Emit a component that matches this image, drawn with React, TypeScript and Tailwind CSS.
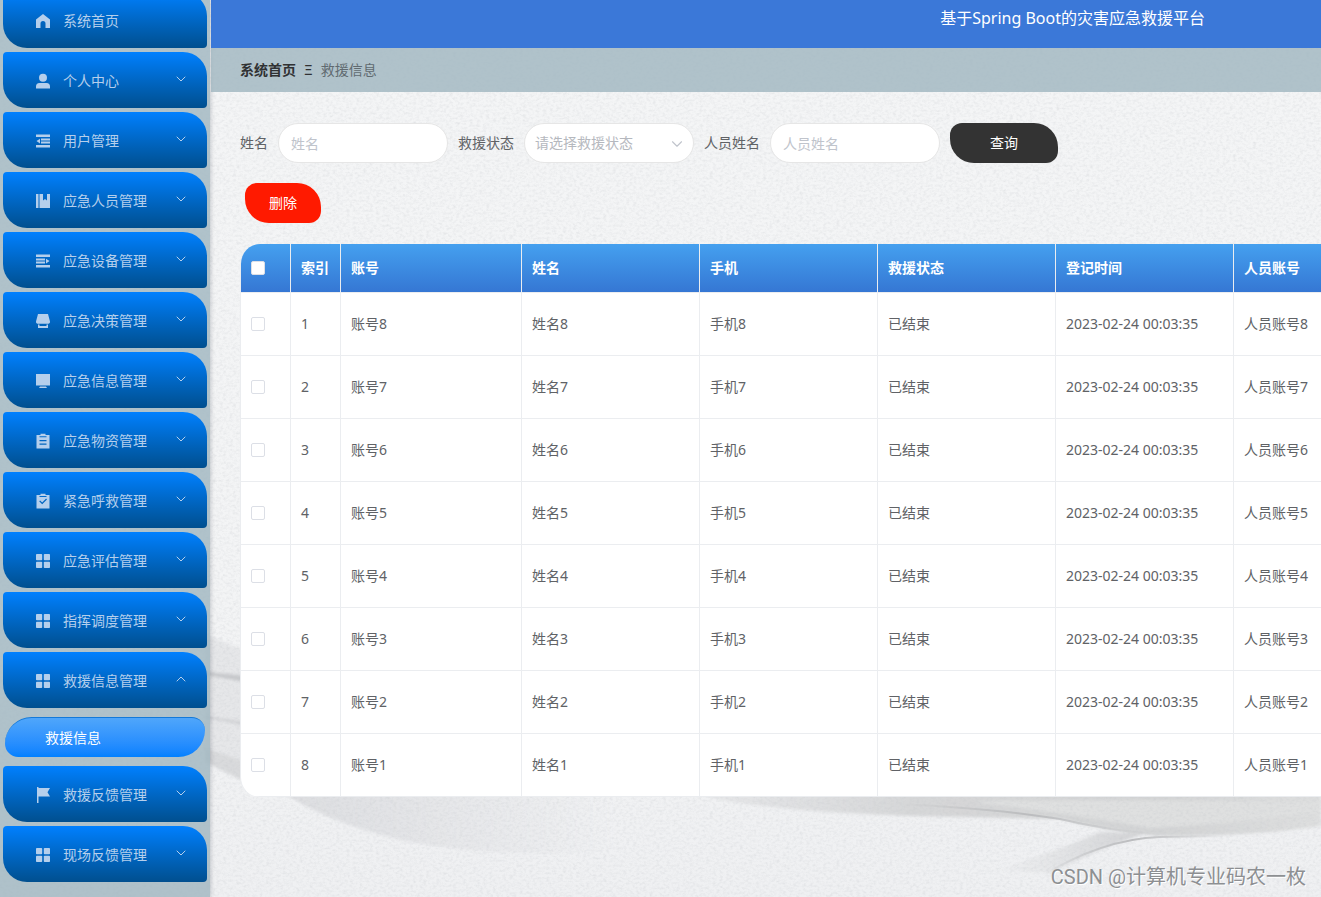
import { useState } from 'react'
import type { ReactNode } from 'react'
import { ChevronDown, ChevronUp } from 'lucide-react'

type IconName =
  | 'home'
  | 'user'
  | 'fold'
  | 'management'
  | 'unfold'
  | 'shop'
  | 'platform'
  | 'order'
  | 'claim'
  | 'menu'
  | 'flag'

interface MenuItem {
  label: string
  icon: IconName
  children?: string[]
}

const MENU: MenuItem[] = [
  { label: '系统首页', icon: 'home' },
  { label: '个人中心', icon: 'user', children: ['修改密码', '个人信息'] },
  { label: '用户管理', icon: 'fold', children: ['用户'] },
  { label: '应急人员管理', icon: 'management', children: ['应急人员'] },
  { label: '应急设备管理', icon: 'unfold', children: ['应急设备'] },
  { label: '应急决策管理', icon: 'shop', children: ['应急决策'] },
  { label: '应急信息管理', icon: 'platform', children: ['应急信息'] },
  { label: '应急物资管理', icon: 'order', children: ['应急物资'] },
  { label: '紧急呼救管理', icon: 'claim', children: ['紧急呼救'] },
  { label: '应急评估管理', icon: 'menu', children: ['应急评估'] },
  { label: '指挥调度管理', icon: 'menu', children: ['指挥调度'] },
  { label: '救援信息管理', icon: 'menu', children: ['救援信息'] },
  { label: '救援反馈管理', icon: 'flag', children: ['救援反馈'] },
  { label: '现场反馈管理', icon: 'menu', children: ['现场反馈'] },
]

const HEADERS = ['索引', '账号', '姓名', '手机', '救援状态', '登记时间', '人员账号']

const ROWS = [8, 7, 6, 5, 4, 3, 2, 1].map((n) => ({
  id: n,
  account: `账号${n}`,
  name: `姓名${n}`,
  phone: `手机${n}`,
  status: '已结束',
  time: '2023-02-24 00:03:35',
  staff: `人员账号${n}`,
}))

const ICONS: Record<IconName, ReactNode> = {
  home: <path d="M8 1 1 6.6V15h4.500v-4.500a2.500 2.500 0 0 1 5 0V15H15V6.600z" />,
  user: (
    <>
      <circle cx="8" cy="4.800" r="4" />
      <path d="M1 15.500v-2a3.500 3.500 0 0 1 3.500-3.500h7a3.500 3.500 0 0 1 3.500 3.500v2z" />
    </>
  ),
  fold: (
    <>
      <path d="M1 1.500h14v2.600H1zM6 5.600h9v2H6zM6 8.600h9v2H6zM1 12h14v2.600H1z" />
      <path d="M1.500 8.100 5 5.800v4.600z" />
    </>
  ),
  management: <path d="M1 1h2.500v14H1zM4.500 1H8v6.500l2-1.600 2 1.600V1h3v14H4.500z" />,
  unfold: (
    <>
      <path d="M1 1.500h14v2.600H1zM1 5.600h9v2H1zM1 8.600h9v2H1zM1 12h14v2.600H1z" />
      <path d="M14.500 8.100 11 5.800v4.600z" />
    </>
  ),
  shop: (
    <path d="M3 1h10l2 7.500a2 2 0 0 1-1.500 2.300H2.500A2 2 0 0 1 1 8.500zM3 11.500h1.500v1.500h7v-1.500H13v3.500H3z" />
  ),
  platform: <path d="M1 1h14v11.500H1zM5 13.500h6l1 1.500H4z" />,
  order: (
    <path
      fillRule="evenodd"
      d="M5.500.800h5V2H14.500v13.500h-13V2h4zM4.500 3.200h7V4.200h-7zM4.500 7v1.200h7V7zM4.500 10.500v1.200h7v-1.200z"
    />
  ),
  claim: (
    <path
      fillRule="evenodd"
      d="M5.500.800h5V2H14.500v13.500h-13V2h4zM4.500 3h7v1h-7zM4.200 8.300l3 3L12 6.500l-.9-.9-3.900 3.900L5.100 7.400z"
    />
  ),
  menu: (
    <>
      <rect x="1" y="1" width="6.200" height="6.200" rx=".8" />
      <rect x="8.800" y="1" width="6.200" height="6.200" rx=".8" />
      <rect x="1" y="8.800" width="6.200" height="6.200" rx=".8" />
      <rect x="8.800" y="8.800" width="6.200" height="6.200" rx=".8" />
    </>
  ),
  flag: <path d="M2 0h1.500v1H15l-2.500 4.200L15 9.500H3.500V16H2z" />,
}

function MenuIcon({ name }: { name: IconName }) {
  return (
    <svg viewBox="0 0 16 16" className="size-4 shrink-0 fill-current" aria-hidden="true">
      {ICONS[name]}
    </svg>
  )
}

/** Linen texture with the grey ribbons that run along the bottom of the page. */
function Backdrop() {
  return (
    <svg
      viewBox="0 0 1321 897"
      preserveAspectRatio="none"
      className="absolute inset-0 h-full w-full"
      aria-hidden="true"
    >
      <defs>
        <filter id="linen" x="0" y="0" width="100%" height="100%">
          <feTurbulence type="fractalNoise" baseFrequency="0.3 0.4" numOctaves="3" seed="4" />
          <feColorMatrix values="0 0 0 0 0.5  0 0 0 0 0.52  0 0 0 0 0.55  0.35 0.35 0 0 -0.3" />
        </filter>
        <filter id="soft">
          <feGaussianBlur stdDeviation="1.500" />
        </filter>
        <linearGradient id="ribbon" x1="0" x2="1">
          <stop offset="0" stopColor="#dcdddf" stopOpacity="0.5" />
          <stop offset="0.35" stopColor="#d6d7d8" />
          <stop offset="0.75" stopColor="#d3d4d5" />
          <stop offset="1" stopColor="#dedfdf" />
        </linearGradient>
        <linearGradient id="fold-left" x1="0" x2="1">
          <stop offset="0" stopColor="#dcdde0" />
          <stop offset="1" stopColor="#dcdde0" stopOpacity="0" />
        </linearGradient>
        <linearGradient id="fold-right" x1="0" x2="1">
          <stop offset="0" stopColor="#d8d9db" stopOpacity="0" />
          <stop offset="1" stopColor="#d0d1d3" />
        </linearGradient>
        <linearGradient id="crease" x1="0" x2="1">
          <stop offset="0" stopColor="#bbbcbe" stopOpacity="0" />
          <stop offset="0.5" stopColor="#bbbcbe" />
          <stop offset="1" stopColor="#bbbcbe" stopOpacity="0" />
        </linearGradient>
        <linearGradient id="paper" x1="0" y1="0" x2="0" y2="1">
          <stop offset="0" stopColor="#f4f5f6" />
          <stop offset="0.7" stopColor="#f3f4f5" />
          <stop offset="1" stopColor="#eff0f2" />
        </linearGradient>
      </defs>
      <rect width="1321" height="897" fill="url(#paper)" />
      <g filter="url(#soft)">
        <path d="M205 634 Q225 642 245 651 V780 Q225 772 205 762z" fill="#e6e7e9" />
        <path d="M205 672 Q230 674 245 676 V682 Q225 678 205 675z" fill="#c6c7ca" />
        <path d="M205 716 Q230 719 245 722 V726 Q225 721 205 718z" fill="#d2d3d6" />
        <path d="M205 748 Q230 756 245 762 V782 Q225 772 205 762z" fill="#d9dadc" />
        <path d="M280 790 Q320 820 400 840 Q500 860 620 850 V790z" fill="url(#fold-left)" />
        <path
          d="M690 792 Q760 814 960 817 L1060 819 Q1110 832 1157 836 Q1260 836 1321 826 V790z"
          fill="url(#ribbon)"
        />
        <path d="M980 801 Q1120 799 1321 802 V812 Q1230 824 1150 828 Q1060 812 980 803z" fill="#dfe0e0" />
        <path d="M990 872 Q1060 850 1100 832 L1143 834 Q1100 848 1054 872z" fill="url(#fold-right)" />
      </g>
      <path d="M900 804 Q1000 809 1060 819 Q1110 831 1157 834" fill="none" stroke="url(#crease)" strokeWidth="2" />
      <path d="M1040 877 Q1102 839 1160 837 L1225 836" fill="none" stroke="url(#crease)" strokeWidth="2" />
      <rect width="1321" height="897" filter="url(#linen)" />
    </svg>
  )
}

function Sidebar() {
  const [open, setOpen] = useState('救援信息管理')

  return (
    <aside className="relative w-[210px] shrink-0 overflow-hidden bg-[#9fb5bf]/80 shadow-[1px_0_4px_rgba(0,21,41,0.2)]">
      <nav className="-mt-2 space-y-1 px-[3px] text-sm">
        {MENU.map((item) => {
          const expanded = open === item.label
          const Chevron = expanded ? ChevronUp : ChevronDown
          return (
            <div key={item.label}>
              <button
                type="button"
                aria-expanded={item.children ? expanded : undefined}
                onClick={() => setOpen(expanded ? '' : item.label)}
                className="flex h-14 w-full items-center rounded-[4px_24px_4px_24px] bg-linear-to-b from-[#0080ff] to-[#004f8f] pt-0.5 pr-[18px] pl-8 text-[#b5cfec]"
              >
                <MenuIcon name={item.icon} />
                <span className="ml-3">{item.label}</span>
                {item.children && <Chevron className="mb-1 ml-auto size-4" strokeWidth={1.5} />}
              </button>
              {expanded && item.children && (
                <div className="px-0.5 pt-[9px] pb-[5px]">
                  {item.children.map((child) => (
                    <a
                      key={child}
                      href="#"
                      className="flex h-10 items-center rounded-[32px_16px_32px_16px] border-t border-[#1479d8] bg-linear-to-b from-[#4fa6fb] to-[#0080ff] px-10 text-white"
                    >
                      {child}
                    </a>
                  ))}
                </div>
              )}
            </div>
          )
        })}
      </nav>
    </aside>
  )
}

const fieldClass =
  'h-10 w-[170px] rounded-[20px] border border-[#e6e6e6] bg-white px-3 text-sm text-[#606266] outline-none placeholder:text-[#c0c4cc]'

function SearchForm() {
  return (
    <form className="flex items-center gap-[10px] text-sm text-[#606266]" onSubmit={(e) => e.preventDefault()}>
      <label htmlFor="name">姓名</label>
      <input id="name" type="text" placeholder="姓名" className={fieldClass} />
      <label htmlFor="status">救援状态</label>
      <div className="relative">
        <select
          id="status"
          defaultValue=""
          className="h-10 w-[170px] appearance-none rounded-[20px] border border-[#e6e6e6] bg-white px-[10px] text-sm text-[#b5b8be] outline-none"
        >
          <option value="">请选择救援状态</option>
          <option value="done">已结束</option>
        </select>
        <ChevronDown
          className="pointer-events-none absolute top-3 right-2 size-[18px] text-[#c0c4cc]"
          strokeWidth={1.5}
        />
      </div>
      <label htmlFor="staff-name">人员姓名</label>
      <input id="staff-name" type="text" placeholder="人员姓名" className={fieldClass} />
      <button
        type="submit"
        className="h-10 w-[108px] rounded-[12px_24px_12px_24px] bg-[#333333] text-sm text-white"
      >
        查询
      </button>
    </form>
  )
}

function RescueTable() {
  const [selected, setSelected] = useState<number[]>([])

  const toggle = (id: number) => {
    setSelected((prev) => (prev.includes(id) ? prev.filter((v) => v !== id) : [...prev, id]))
  }

  const td = 'border-r border-b border-[#ebedf0] px-[10px]'
  const box =
    'block size-3.5 appearance-none rounded-[2px] border border-[#dcdfe6] bg-white checked:bg-[#409eff]'

  return (
    <div className="w-max overflow-hidden rounded-l-[20px] border-l border-[#ebedf0] bg-white">
      <table className="w-[1171px] table-fixed border-separate border-spacing-0 text-left text-sm text-[#606266]">
        <colgroup>
          <col className="w-[50px]" />
          <col className="w-[50px]" />
          <col className="w-[181px]" />
          <col className="w-[178px]" />
          <col className="w-[178px]" />
          <col className="w-[178px]" />
          <col className="w-[178px]" />
          <col className="w-[178px]" />
        </colgroup>
        <thead>
          <tr className="h-[49px] bg-linear-to-b from-[#45a0ef] to-[#3576d3] text-white">
            <th className="border-r border-b border-[#ebedf0] px-[10px]">
              <input
                type="checkbox"
                aria-label="全选"
                className={box}
                checked={selected.length === ROWS.length}
                onChange={(e) => setSelected(e.target.checked ? ROWS.map((r) => r.id) : [])}
              />
            </th>
            {HEADERS.map((h) => (
              <th key={h} className="border-r border-b border-[#ebedf0] px-[10px] font-bold">
                {h}
              </th>
            ))}
          </tr>
        </thead>
        <tbody>
          {ROWS.map((row, i) => (
            <tr key={row.id} className="h-[63px]">
              <td className={td}>
                <input
                  type="checkbox"
                  aria-label={row.account}
                  className={box}
                  checked={selected.includes(row.id)}
                  onChange={() => toggle(row.id)}
                />
              </td>
              <td className={td}>{i + 1}</td>
              <td className={td}>{row.account}</td>
              <td className={td}>{row.name}</td>
              <td className={td}>{row.phone}</td>
              <td className={td}>{row.status}</td>
              <td className={td}>{row.time}</td>
              <td className={td}>{row.staff}</td>
            </tr>
          ))}
        </tbody>
      </table>
    </div>
  )
}

export default function App() {
  return (
    <div className="relative flex h-screen overflow-hidden font-['Noto_Sans','Noto_Sans_CJK_SC',sans-serif]">
      <Backdrop />
      <Sidebar />
      <div className="relative ml-px min-w-0 flex-1 overflow-hidden">
        <header className="flex h-12 items-center justify-end bg-[#3b78d8] pr-29 pb-3">
          <h1 className="text-base text-white">基于Spring Boot的灾害应急救援平台</h1>
        </header>
        <div className="flex h-11 items-center bg-[#9fb5bf]/80 px-[29px] text-sm">
          <a href="#" className="font-bold text-[#303133]">
            系统首页
          </a>
          <span className="mx-2 text-[#303133]">Ξ</span>
          <span className="text-[#606a70]">救援信息</span>
        </div>
        <main className="px-[29px] pt-[31px]">
          <SearchForm />
          <button
            type="button"
            className="mt-5 mb-[21px] ml-[5px] block h-10 w-[76px] rounded-[12px_24px_12px_24px] bg-[#ff1a00] text-sm text-white"
          >
            删除
          </button>
          <RescueTable />
        </main>
      </div>
      <p className="absolute right-[15px] bottom-1.5 font-[Roboto,'Noto_Sans_CJK_SC',sans-serif] text-xl leading-7 text-[#8d8f92] [text-shadow:1px_1px_0_#ffffff]">
        CSDN @计算机专业码农一枚
      </p>
    </div>
  )
}
